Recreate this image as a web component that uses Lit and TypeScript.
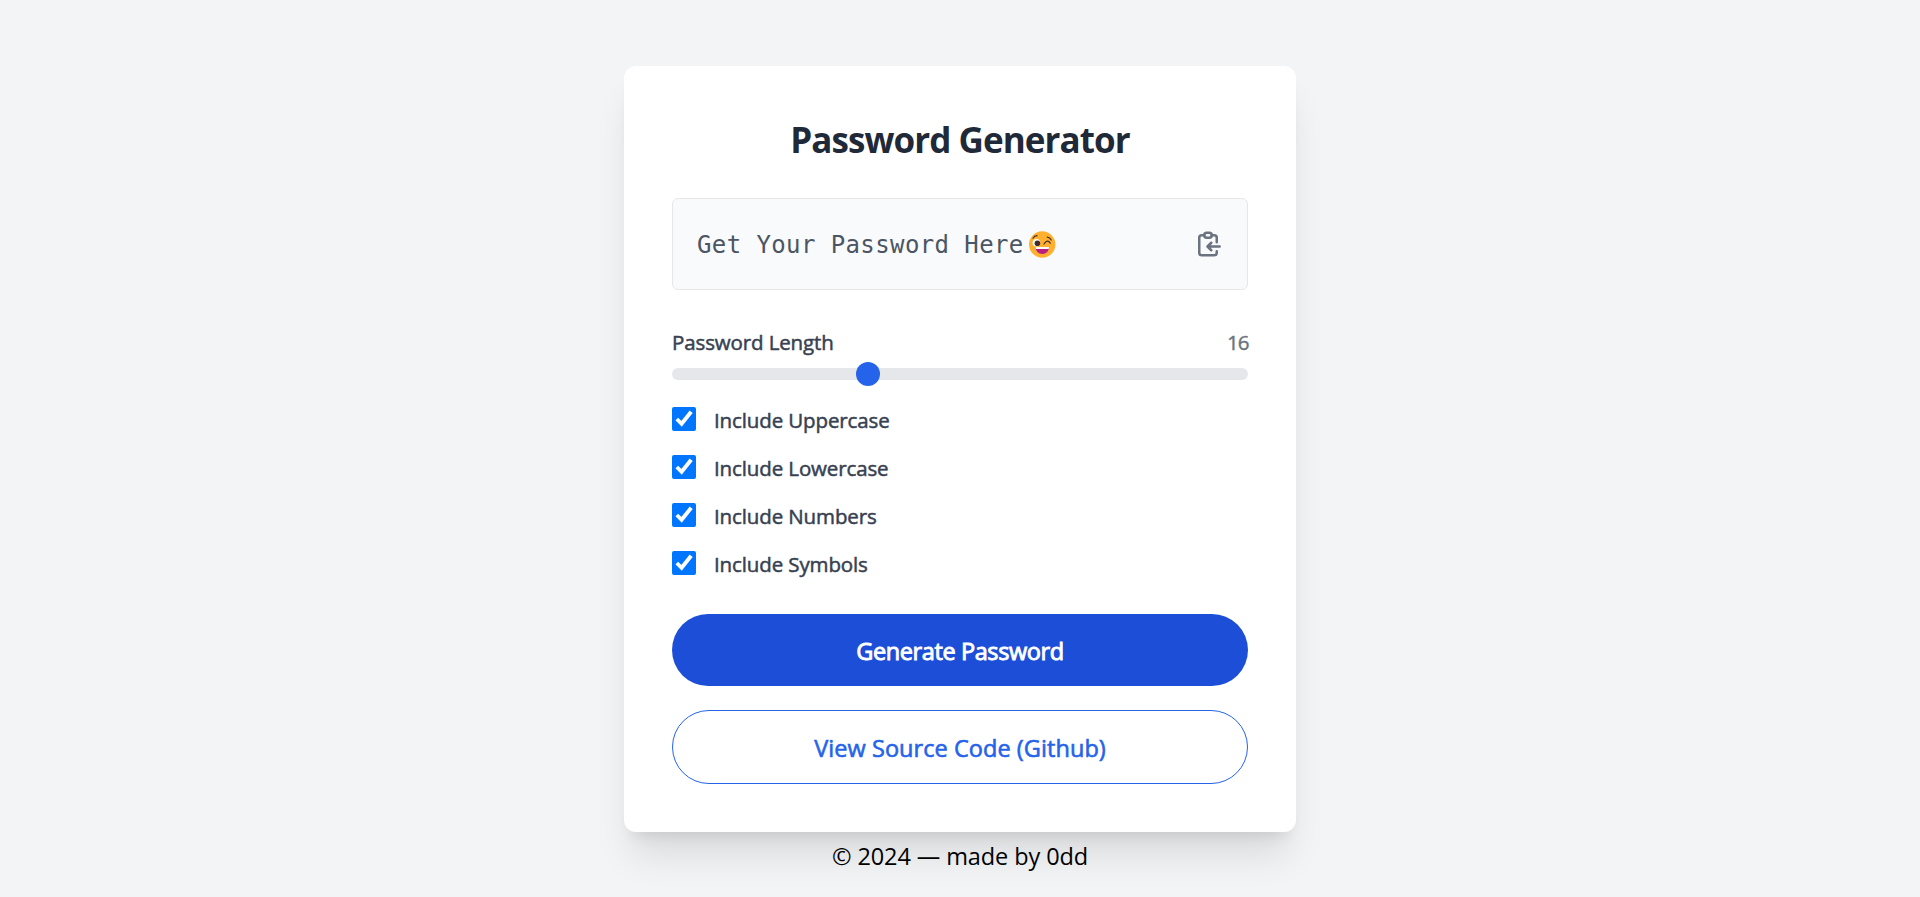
import { LitElement, html, css } from "lit";
import { customElement, state } from "lit/decorators.js";

@customElement("app-root")
class AppRoot extends LitElement {
  @state() private length = 16;
  @state() private options = ["Uppercase", "Lowercase", "Numbers", "Symbols"];

  static styles = css`
    :host {
      display: block;
      box-sizing: border-box;
      height: 100vh;
      overflow: hidden;
      padding-top: 66px;
      background: #f3f4f6;
      font-family: "Open Sans", "Noto Sans", sans-serif;
    }
    .card {
      box-sizing: border-box;
      width: 672px;
      height: 766px;
      margin: 0 auto;
      padding: 50px 48px 48px;
      background: #fff;
      border-radius: 12px;
      box-shadow: 0 30px 37.5px -7.5px rgba(0, 0, 0, 0.1), 0 12px 15px -9px rgba(0, 0, 0, 0.1);
    }
    .title {
      margin: 0 0 34px;
      font-size: 35px;
      line-height: 48px;
      font-weight: 700;
      letter-spacing: -0.92px;
      text-align: center;
      color: #1f2937;
    }
    .display {
      box-sizing: border-box;
      display: flex;
      align-items: center;
      justify-content: space-between;
      height: 92px;
      padding: 0 24px;
      border: 1px solid #e5e7eb;
      border-radius: 6px;
      background: #f9fafb;
      color: #4b5563;
    }
    .output {
      display: flex;
      align-items: center;
      font-family: "DejaVu Sans Mono", "Liberation Mono", monospace;
      font-size: 24px;
      line-height: 42px;
      letter-spacing: 0.4px;
      white-space: pre;
    }
    .placeholder { padding-top: 2px; }
    .emoji { width: 27px; height: 27px; margin-left: 5px; }
    .copy { display: block; width: 30px; height: 30px; color: #6b7280; }
    .length {
      display: flex;
      justify-content: space-between;
      margin-top: 37px;
      font-size: 20.5px;
      line-height: 30px;
      color: #374151;
    }
    .medium { letter-spacing: -0.12px; -webkit-text-stroke: 0.5px currentColor; }
    .count { color: #6b7280; letter-spacing: -1px; margin-right: -0.5px; -webkit-text-stroke: 0.4px currentColor; }
    .range {
      display: block;
      appearance: none;
      width: 100%;
      height: 12px;
      margin: 11px 0 25px;
      border-radius: 12px;
      background: #e5e7eb;
      outline: none;
    }
    .range::-webkit-slider-thumb {
      appearance: none;
      width: 24px;
      height: 24px;
      border-radius: 50%;
      background: #2563eb;
    }
    .options { display: flex; flex-direction: column; gap: 18px; }
    .option {
      display: flex;
      gap: 18px;
      height: 30px;
      font-size: 20.5px;
      line-height: 30px;
      color: #374151;
    }
    .check { width: 24px; height: 24px; margin: 2px 0 0; }
    .button {
      box-sizing: border-box;
      display: block;
      width: 100%;
      border-radius: 37px;
      font: 400 23.5px/36px "Open Sans", "Noto Sans", sans-serif;
      text-align: center;
      text-decoration: none;
    }
    .primary {
      height: 72px;
      margin: 35px 0 24px;
      padding: 19px 0 17px;
      border: 0;
      background: #1d4ed8;
      color: #fff;
      letter-spacing: -0.4px;
      -webkit-text-stroke: 0.9px currentColor;
    }
    .outline {
      height: 74px;
      padding: 19px 0 17px;
      border: 1px solid #2563eb;
      color: #2563eb;
      letter-spacing: 0.06px;
      -webkit-text-stroke: 0.6px currentColor;
    }
    .footer {
      margin-top: 6px;
      font-size: 23.5px;
      line-height: 36px;
      letter-spacing: -0.1px;
      text-align: center;
      color: #000;
    }
  `;

  render() {
    return html`
      <main class="card">
        <h1 class="title">Password Generator</h1>
        <div class="display">
          <span class="output"><span class="placeholder">Get Your Password Here</span><svg class="emoji" viewBox="0 0 27 27" fill="none" stroke-linecap="round">
              <circle cx="13.2" cy="13.5" r="13.2" fill="#ffb02e" />
              <circle cx="7.4" cy="11.8" r="3.8" fill="#fff" />
              <circle cx="8.4" cy="12.3" r="2.8" fill="#402a32" />
              <path d="M4 7.2Q5.4 4.8 8 4.7M18.3 6.2Q21 6.5 22.2 9M15 13Q18.3 7.7 21.3 12.2" stroke="#402a32" stroke-width="1.2" />
              <path d="M6.6 16H20Q19.6 23 13.3 23T6.6 16Z" fill="#bb1d80" />
              <path d="M6.6 16H20L19.6 18H7Z" fill="#fff" />
            </svg></span>
          <svg class="copy" viewBox="0 0 24 24" fill="none" stroke="currentColor" stroke-width="2" stroke-linecap="round" stroke-linejoin="round">
            <rect x="9" y="3" width="6" height="4" rx="2" />
            <path d="M9 5H7a2 2 0 0 0-2 2v12a2 2 0 0 0 2 2h10a2 2 0 0 0 2-2v-1.2M15 5h2a2 2 0 0 1 2 2v3.5M21.3 14h-9.5M14.6 11l-3 3l3 3" />
          </svg>
        </div>
        <div class="length"><span class="medium">Password Length</span><span class="count">${this.length}</span></div>
        <input class="range" type="range" min="4" max="40" .value=${String(this.length)}
          @input=${(e: Event) => (this.length = Number((e.target as HTMLInputElement).value))} />
        <div class="options">
          ${this.options.map(
            (name) => html`<label class="option"><input class="check" type="checkbox" checked /><span class="medium">Include ${name}</span></label>`
          )}
        </div>
        <button class="button primary">Generate Password</button>
        <a class="button outline">View Source Code (Github)</a>
      </main>
      <div class="footer">© 2024 — made by 0dd</div>
    `;
  }
}
